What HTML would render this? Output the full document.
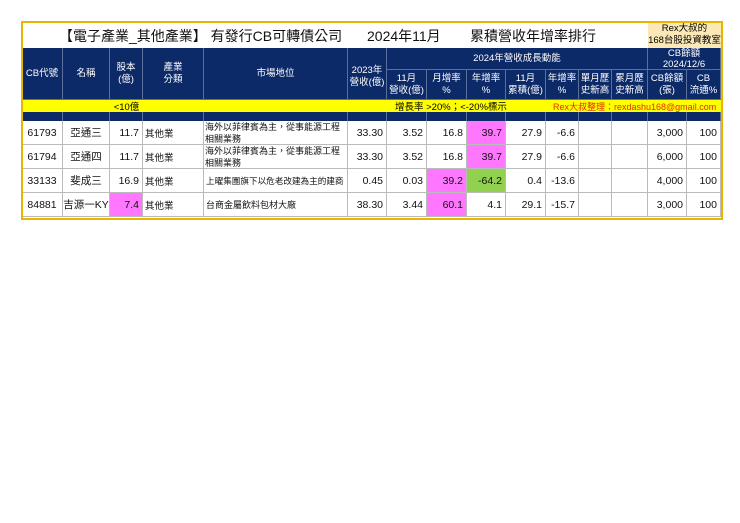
<!DOCTYPE html>
<html><head><meta charset="utf-8"><style>
body{margin:0;background:#fff;width:740px;height:523px;position:relative;font-family:"Liberation Sans","Noto Sans CJK TC",sans-serif;overflow:hidden}
div{position:absolute;box-sizing:border-box}
.c{display:flex;align-items:center;justify-content:center;text-align:center;white-space:nowrap;overflow:hidden}
.h{background:#0d2a68;color:#fff;font-size:9.5px;line-height:12px;border-right:1px solid #5a6f9a;border-bottom:1px solid #5a6f9a}
.r{border-right:1px solid #bbb;border-bottom:1px solid #bbb;font-size:10.5px;color:#111;height:24px}
.rt{justify-content:flex-end;padding-right:3px}
.lt{justify-content:flex-start;padding-left:2px;font-size:9.5px}
.m{justify-content:flex-start;padding-left:1px;font-size:9px;line-height:12px;white-space:normal;text-align:left}
.p{background:#ff77ff}.g{background:#92d050}
.t{top:26px;font-size:14px;color:#111;white-space:nowrap}
.dk{background:#0d2a68;top:112px;height:9px;border-right:1px solid #5a6f9a}
</style></head><body>
<div class="t" style="left:59px">【電子產業_其他產業】 有發行CB可轉債公司</div>
<div class="t" style="left:367px">2024年11月</div>
<div class="t" style="left:470px">累積營收年增率排行</div>
<div class="c" style="left:648px;top:22px;width:73px;height:26px;background:#fbe8b6;font-size:9.5px;line-height:12px">Rex大叔的<br>168台股投資教室</div>

<div class="c h" style="left:22px;top:48px;width:41px;height:52px">CB代號</div>
<div class="c h" style="left:63px;top:48px;width:47px;height:52px">名稱</div>
<div class="c h" style="left:110px;top:48px;width:33px;height:52px">股本<br>(億)</div>
<div class="c h" style="left:143px;top:48px;width:61px;height:52px">產業<br>分類</div>
<div class="c h" style="left:204px;top:48px;width:144px;height:52px">市場地位</div>
<div class="c h" style="left:348px;top:48px;width:39px;height:52px;padding-top:6px">2023年<br>營收(億)</div>
<div class="c h" style="left:387px;top:48px;width:261px;height:22px">2024年營收成長動能</div>
<div class="c h" style="left:648px;top:48px;width:73px;height:22px;line-height:11px">CB餘額<br>2024/12/6</div>
<div class="c h" style="left:387px;top:70px;width:40px;height:30px">11月<br>營收(億)</div>
<div class="c h" style="left:427px;top:70px;width:40px;height:30px">月增率<br>%</div>
<div class="c h" style="left:467px;top:70px;width:39px;height:30px">年增率<br>%</div>
<div class="c h" style="left:506px;top:70px;width:40px;height:30px">11月<br>累積(億)</div>
<div class="c h" style="left:546px;top:70px;width:33px;height:30px">年增率<br>%</div>
<div class="c h" style="left:579px;top:70px;width:33px;height:30px">單月歷<br>史新高</div>
<div class="c h" style="left:612px;top:70px;width:36px;height:30px">累月歷<br>史新高</div>
<div class="c h" style="left:648px;top:70px;width:39px;height:30px">CB餘額<br>(張)</div>
<div class="c h" style="left:687px;top:70px;width:34px;height:30px">CB<br>流通%</div>

<div style="left:22px;top:100px;width:699px;height:12px;background:#ffff00"></div>
<div class="c" style="left:110px;top:100px;width:33px;height:12px;font-size:9.5px">&lt;10億</div>
<div class="c" style="left:395px;top:100px;height:12px;font-size:9.5px">增長率 &gt;20%；&lt;-20%標示</div>
<div class="c" style="left:553px;top:100px;height:12px;font-size:9px;color:#e03000">Rex大叔整理：rexdashu168@gmail.com</div>

<div class="dk" style="left:22px;width:41px"></div><div class="dk" style="left:63px;width:47px"></div><div class="dk" style="left:110px;width:33px"></div><div class="dk" style="left:143px;width:61px"></div><div class="dk" style="left:204px;width:144px"></div><div class="dk" style="left:348px;width:39px"></div><div class="dk" style="left:387px;width:40px"></div><div class="dk" style="left:427px;width:40px"></div><div class="dk" style="left:467px;width:39px"></div><div class="dk" style="left:506px;width:40px"></div><div class="dk" style="left:546px;width:33px"></div><div class="dk" style="left:579px;width:33px"></div><div class="dk" style="left:612px;width:36px"></div><div class="dk" style="left:648px;width:39px"></div><div class="dk" style="left:687px;width:34px"></div>

<div class="c r" style="left:22px;top:121px;width:41px">61793</div>
<div class="c r" style="left:63px;top:121px;width:47px">亞通三</div>
<div class="c r rt" style="left:110px;top:121px;width:33px">11.7</div>
<div class="c r lt" style="left:143px;top:121px;width:61px">其他業</div>
<div class="c r m" style="left:204px;top:121px;width:144px">海外以菲律賓為主，從事能源工程相關業務</div>
<div class="c r rt" style="left:348px;top:121px;width:39px">33.30</div>
<div class="c r rt" style="left:387px;top:121px;width:40px">3.52</div>
<div class="c r rt" style="left:427px;top:121px;width:40px">16.8</div>
<div class="c r rt p" style="left:467px;top:121px;width:39px">39.7</div>
<div class="c r rt" style="left:506px;top:121px;width:40px">27.9</div>
<div class="c r rt" style="left:546px;top:121px;width:33px">-6.6</div>
<div class="c r" style="left:579px;top:121px;width:33px"></div>
<div class="c r" style="left:612px;top:121px;width:36px"></div>
<div class="c r rt" style="left:648px;top:121px;width:39px">3,000</div>
<div class="c r rt" style="left:687px;top:121px;width:34px">100</div>

<div class="c r" style="left:22px;top:145px;width:41px">61794</div>
<div class="c r" style="left:63px;top:145px;width:47px">亞通四</div>
<div class="c r rt" style="left:110px;top:145px;width:33px">11.7</div>
<div class="c r lt" style="left:143px;top:145px;width:61px">其他業</div>
<div class="c r m" style="left:204px;top:145px;width:144px">海外以菲律賓為主，從事能源工程相關業務</div>
<div class="c r rt" style="left:348px;top:145px;width:39px">33.30</div>
<div class="c r rt" style="left:387px;top:145px;width:40px">3.52</div>
<div class="c r rt" style="left:427px;top:145px;width:40px">16.8</div>
<div class="c r rt p" style="left:467px;top:145px;width:39px">39.7</div>
<div class="c r rt" style="left:506px;top:145px;width:40px">27.9</div>
<div class="c r rt" style="left:546px;top:145px;width:33px">-6.6</div>
<div class="c r" style="left:579px;top:145px;width:33px"></div>
<div class="c r" style="left:612px;top:145px;width:36px"></div>
<div class="c r rt" style="left:648px;top:145px;width:39px">6,000</div>
<div class="c r rt" style="left:687px;top:145px;width:34px">100</div>

<div class="c r" style="left:22px;top:169px;width:41px">33133</div>
<div class="c r" style="left:63px;top:169px;width:47px">斐成三</div>
<div class="c r rt" style="left:110px;top:169px;width:33px">16.9</div>
<div class="c r lt" style="left:143px;top:169px;width:61px">其他業</div>
<div class="c r lt" style="left:204px;top:169px;width:144px;font-size:8.6px">上曜集團旗下以危老改建為主的建商</div>
<div class="c r rt" style="left:348px;top:169px;width:39px">0.45</div>
<div class="c r rt" style="left:387px;top:169px;width:40px">0.03</div>
<div class="c r rt p" style="left:427px;top:169px;width:40px">39.2</div>
<div class="c r rt g" style="left:467px;top:169px;width:39px">-64.2</div>
<div class="c r rt" style="left:506px;top:169px;width:40px">0.4</div>
<div class="c r rt" style="left:546px;top:169px;width:33px">-13.6</div>
<div class="c r" style="left:579px;top:169px;width:33px"></div>
<div class="c r" style="left:612px;top:169px;width:36px"></div>
<div class="c r rt" style="left:648px;top:169px;width:39px">4,000</div>
<div class="c r rt" style="left:687px;top:169px;width:34px">100</div>

<div class="c r" style="left:22px;top:193px;width:41px">84881</div>
<div class="c r" style="left:63px;top:193px;width:47px">吉源一KY</div>
<div class="c r rt p" style="left:110px;top:193px;width:33px">7.4</div>
<div class="c r lt" style="left:143px;top:193px;width:61px">其他業</div>
<div class="c r lt" style="left:204px;top:193px;width:144px;font-size:9px">台商金屬飲料包材大廠</div>
<div class="c r rt" style="left:348px;top:193px;width:39px">38.30</div>
<div class="c r rt" style="left:387px;top:193px;width:40px">3.44</div>
<div class="c r rt p" style="left:427px;top:193px;width:40px">60.1</div>
<div class="c r rt" style="left:467px;top:193px;width:39px">4.1</div>
<div class="c r rt" style="left:506px;top:193px;width:40px">29.1</div>
<div class="c r rt" style="left:546px;top:193px;width:33px">-15.7</div>
<div class="c r" style="left:579px;top:193px;width:33px"></div>
<div class="c r" style="left:612px;top:193px;width:36px"></div>
<div class="c r rt" style="left:648px;top:193px;width:39px">3,000</div>
<div class="c r rt" style="left:687px;top:193px;width:34px">100</div>

<div style="left:21px;top:21px;width:702px;height:199px;border:2px solid #e8b400"></div>
</body></html>
